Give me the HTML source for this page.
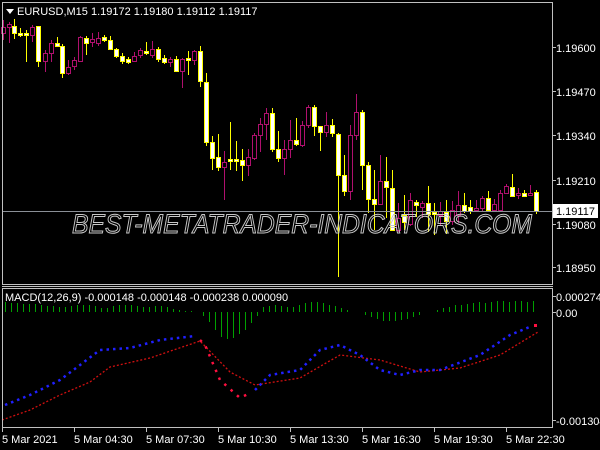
<!DOCTYPE html>
<html><head><style>
body{margin:0;background:#000;width:600px;height:450px;overflow:hidden}
svg{display:block}
text{font-family:"Liberation Sans",sans-serif;font-size:11px;fill:#fff}
.Y{fill:#fff;stroke:#ffff00}.M{fill:#000;stroke:#b0106e}
</style></head><body>
<svg width="600" height="450" xmlns="http://www.w3.org/2000/svg">
<rect width="600" height="450" fill="#000"/>
<g shape-rendering="crispEdges">
<path stroke="#ffff00" stroke-width="1" fill="none" d="M14.5 19V39M20.5 28V37M26.5 30V62M38.5 26V67M57.5 37V47M62.5 44V78M86.5 36V55M104.5 35V42M110.5 36V50M116.5 48V58M122.5 53V64M128.5 57V64M146.5 42V55M158.5 47V62M164.5 55V64M176.5 56V72M188.5 51V75M200.5 46V87M206.5 73V146M212.5 136V170M218.5 134V171M230.5 122V170M236.5 141V171M242.5 149V181M272.5 108V152M278.5 131V162M296.5 118V146M314.5 105V136M320.5 126V151M332.5 119V137M338.5 133V277M344.5 155V196M362.5 110V190M368.5 162V213M374.5 170V230M386.5 157V218M392.5 170V231M404.5 195V230M416.5 200V217M428.5 186V232M434.5 203V235M446.5 200V234M464.5 193V213M470.5 200V214M488.5 191V211M512.5 174V197M524.5 190V197M536.5 190V214"/>
<path stroke="#b0106e" stroke-width="1" fill="none" d="M3.5 20V40M9.5 22V43M32.5 25V42M45.5 50V72M51.5 40V62M68.5 60V75M74.5 57V70M80.5 36V62M92.5 33V47M98.5 32V46M134.5 52V62M140.5 48V58M152.5 41V58M170.5 57V67M182.5 58V88M194.5 50V65M224.5 151V200M248.5 149V176M254.5 133V160M260.5 118V152M266.5 108V140M284.5 140V175M290.5 120V158M302.5 121V147M308.5 105V128M326.5 112V137M350.5 125V200M356.5 94V140M380.5 155V205M398.5 203V232M410.5 193V226M422.5 201V218M440.5 202V226M452.5 201V225M458.5 191V223M476.5 200V212M482.5 196V211M494.5 199V212M500.5 190V211M506.5 184V194M518.5 188V199M530.5 185V196"/>
</g>
<g shape-rendering="crispEdges">
<rect class="M" x="1.5" y="27.5" width="4" height="6"/>
<rect class="M" x="7.5" y="24.5" width="4" height="3"/>
<rect class="Y" x="12.5" y="26.5" width="4" height="7"/>
<rect class="Y" x="18.5" y="33.5" width="4" height="2"/>
<rect class="Y" x="24.5" y="33.5" width="4" height="2"/>
<rect class="M" x="30.5" y="27.5" width="4" height="8"/>
<rect class="Y" x="36.5" y="26.5" width="4" height="35"/>
<rect class="M" x="43.5" y="53.5" width="4" height="8"/>
<rect class="M" x="49.5" y="43.5" width="4" height="10"/>
<rect class="Y" x="55.5" y="43.5" width="4" height="3"/>
<rect class="Y" x="60.5" y="46.5" width="4" height="27"/>
<rect class="M" x="66.5" y="67.5" width="4" height="6"/>
<rect class="M" x="72.5" y="60.5" width="4" height="6"/>
<rect class="M" x="78.5" y="37.5" width="4" height="24"/>
<rect class="Y" x="84.5" y="38.5" width="4" height="5"/>
<rect class="M" x="90.5" y="39.5" width="4" height="3"/>
<rect class="M" x="96.5" y="38.5" width="4" height="5"/>
<rect class="Y" x="102.5" y="37.5" width="4" height="3"/>
<rect class="Y" x="108.5" y="40.5" width="4" height="9"/>
<rect class="Y" x="114.5" y="49.5" width="4" height="7"/>
<rect class="Y" x="120.5" y="56.5" width="4" height="5"/>
<rect class="Y" x="126.5" y="59.5" width="4" height="3"/>
<rect class="M" x="132.5" y="56.5" width="4" height="5"/>
<rect class="M" x="138.5" y="50.5" width="4" height="5"/>
<rect class="Y" x="144.5" y="51.5" width="4" height="2"/>
<rect class="M" x="150.5" y="49.5" width="4" height="6"/>
<rect class="Y" x="156.5" y="49.5" width="4" height="10"/>
<rect class="Y" x="162.5" y="58.5" width="4" height="4"/>
<rect class="M" x="168.5" y="59.5" width="4" height="3"/>
<rect class="Y" x="174.5" y="59.5" width="4" height="12"/>
<rect class="M" x="180.5" y="59.5" width="4" height="12"/>
<rect class="Y" x="186.5" y="58.5" width="4" height="2"/>
<rect class="M" x="192.5" y="51.5" width="4" height="9"/>
<rect class="Y" x="198.5" y="51.5" width="4" height="30"/>
<rect class="Y" x="204.5" y="82.5" width="4" height="60"/>
<rect class="Y" x="210.5" y="142.5" width="4" height="16"/>
<rect class="Y" x="216.5" y="157.5" width="4" height="10"/>
<rect class="M" x="222.5" y="162.5" width="4" height="5"/>
<rect class="Y" x="228.5" y="159.5" width="4" height="2"/>
<rect class="Y" x="234.5" y="159.5" width="4" height="2"/>
<rect class="Y" x="240.5" y="160.5" width="4" height="5"/>
<rect class="M" x="246.5" y="157.5" width="4" height="8"/>
<rect class="M" x="252.5" y="135.5" width="4" height="23"/>
<rect class="M" x="258.5" y="124.5" width="4" height="11"/>
<rect class="M" x="264.5" y="113.5" width="4" height="11"/>
<rect class="Y" x="270.5" y="113.5" width="4" height="36"/>
<rect class="Y" x="276.5" y="149.5" width="4" height="9"/>
<rect class="M" x="282.5" y="149.5" width="4" height="9"/>
<rect class="M" x="288.5" y="140.5" width="4" height="9"/>
<rect class="Y" x="294.5" y="140.5" width="4" height="4"/>
<rect class="M" x="300.5" y="125.5" width="4" height="20"/>
<rect class="M" x="306.5" y="107.5" width="4" height="18"/>
<rect class="Y" x="312.5" y="107.5" width="4" height="19"/>
<rect class="Y" x="318.5" y="126.5" width="4" height="6"/>
<rect class="M" x="324.5" y="125.5" width="4" height="7"/>
<rect class="Y" x="330.5" y="125.5" width="4" height="8"/>
<rect class="Y" x="336.5" y="134.5" width="4" height="41"/>
<rect class="Y" x="342.5" y="175.5" width="4" height="16"/>
<rect class="M" x="348.5" y="135.5" width="4" height="56"/>
<rect class="M" x="354.5" y="112.5" width="4" height="23"/>
<rect class="Y" x="360.5" y="112.5" width="4" height="53"/>
<rect class="Y" x="366.5" y="165.5" width="4" height="34"/>
<rect class="Y" x="372.5" y="199.5" width="4" height="5"/>
<rect class="M" x="378.5" y="181.5" width="4" height="23"/>
<rect class="Y" x="384.5" y="181.5" width="4" height="6"/>
<rect class="Y" x="390.5" y="188.5" width="4" height="42"/>
<rect class="M" x="396.5" y="218.5" width="4" height="12"/>
<rect class="Y" x="402.5" y="215.5" width="4" height="7"/>
<rect class="M" x="408.5" y="200.5" width="4" height="24"/>
<rect class="Y" x="414.5" y="202.5" width="4" height="3"/>
<rect class="M" x="420.5" y="203.5" width="4" height="4"/>
<rect class="Y" x="426.5" y="203.5" width="4" height="11"/>
<rect class="Y" x="432.5" y="212.5" width="4" height="2"/>
<rect class="M" x="438.5" y="211.5" width="4" height="4"/>
<rect class="Y" x="444.5" y="212.5" width="4" height="9"/>
<rect class="M" x="450.5" y="210.5" width="4" height="11"/>
<rect class="M" x="456.5" y="205.5" width="4" height="10"/>
<rect class="Y" x="462.5" y="205.5" width="4" height="6"/>
<rect class="Y" x="468.5" y="207.5" width="4" height="4"/>
<rect class="M" x="474.5" y="208.5" width="4" height="2"/>
<rect class="M" x="480.5" y="198.5" width="4" height="10"/>
<rect class="Y" x="486.5" y="198.5" width="4" height="12"/>
<rect class="M" x="492.5" y="204.5" width="4" height="6"/>
<rect class="M" x="498.5" y="193.5" width="4" height="17"/>
<rect class="M" x="504.5" y="186.5" width="4" height="7"/>
<rect class="Y" x="510.5" y="187.5" width="4" height="9"/>
<rect class="M" x="516.5" y="193.5" width="4" height="2"/>
<rect class="Y" x="522.5" y="193.5" width="4" height="3"/>
<rect class="M" x="528.5" y="193.5" width="4" height="2"/>
<rect class="Y" x="534.5" y="192.5" width="4" height="19"/>
</g>
<rect x="2" y="211" width="550" height="1" fill="#8a8f96"/>
<text x="72" y="233" font-style="italic" stroke="#c8c8c8" stroke-width="1" textLength="460" lengthAdjust="spacingAndGlyphs" style="font-size:27px;fill:none">BEST-METATRADER-INDICATORS.COM</text>
<path stroke="#00a000" stroke-width="1" fill="none" d="M5.5 312V302M11.5 312V303M17.5 312V303M23.5 312V304M29.5 312V304M35.5 312V304M41.5 312V305M47.5 312V306M53.5 312V306M59.5 312V307M65.5 312V307M71.5 312V306M77.5 312V305M83.5 312V305M89.5 312V305M95.5 312V306M101.5 312V308M107.5 312V308M113.5 312V306M119.5 312V305M125.5 312V305M131.5 312V305M137.5 312V306M143.5 312V307M149.5 312V307M155.5 312V306M161.5 312V306M167.5 312V307M173.5 312V309M179.5 312V310M185.5 312V311M191.5 312V311M203.5 312V316M209.5 312V322M215.5 312V330M221.5 312V337M227.5 312V339M233.5 312V338M239.5 312V334M245.5 312V330M251.5 312V323M257.5 312V316M263.5 312V307M269.5 312V306M275.5 312V305M281.5 312V306M287.5 312V307M293.5 312V307M299.5 312V305M305.5 312V303M311.5 312V302M317.5 312V302M323.5 312V303M329.5 312V305M335.5 312V306M341.5 312V308M347.5 312V310M365.5 312V315M371.5 312V317M377.5 312V319M383.5 312V321M389.5 312V321M395.5 312V321M401.5 312V320M407.5 312V319M413.5 312V317M419.5 312V315M437.5 312V310M443.5 312V308M449.5 312V307M455.5 312V305M461.5 312V305M467.5 312V304M473.5 312V303M479.5 312V302M485.5 312V303M491.5 312V302M497.5 312V301M503.5 312V301M509.5 312V302M515.5 312V301M521.5 312V301M527.5 312V302M533.5 312V301"/>
<polyline fill="none" stroke="#d01010" stroke-width="1.3" stroke-dasharray="2 2" points="2,420 30,410 60,395 90,382 110,367 150,358 200,341 230,372 255,385 300,378 340,355 380,360 420,372 460,368 500,355 538,332"/>
<polyline fill="none" stroke="#2020ff" stroke-width="2.5" stroke-dasharray="2.5 4" points="5,405 30,395 60,380 100,350 130,348 160,340 195,336"/>
<polyline fill="none" stroke="#ff1040" stroke-width="2.5" stroke-dasharray="2.5 6" points="200,340 205,345 220,380 240,398 250,393"/>
<polyline fill="none" stroke="#2020ff" stroke-width="2.5" stroke-dasharray="2.5 4" points="255,390 270,375 300,370 320,350 340,345 360,355 380,370 400,375 420,370 440,370 480,355 510,335 532,326"/>
<rect x="534" y="324" width="3" height="3" fill="#ff1040"/>
<rect x="2.5" y="2.5" width="550" height="282" fill="none" stroke="#c0c0c0"/>
<rect x="2" y="286" width="551" height="1" fill="#c0c0c0"/>
<rect x="2.5" y="288.5" width="550" height="139" fill="none" stroke="#c0c0c0"/>
<polygon points="6,9 14,9 10,14" fill="#fff"/>
<text x="17" y="15">EURUSD,M15  1.19172 1.19180 1.19112 1.19117</text>
<text x="5" y="301">MACD(12,26,9) -0.000148 -0.000148 -0.000238 0.000090</text>
<g fill="#c0c0c0">
<rect x="552" y="47" width="4" height="1"/><rect x="552" y="91" width="4" height="1"/><rect x="552" y="135" width="4" height="1"/><rect x="552" y="180" width="4" height="1"/><rect x="552" y="224" width="4" height="1"/><rect x="552" y="267" width="4" height="1"/><rect x="552" y="296" width="4" height="1"/><rect x="552" y="312" width="4" height="1"/><rect x="552" y="420" width="4" height="1"/>
<rect x="2" y="428" width="1" height="4"/><rect x="74" y="428" width="1" height="4"/><rect x="146" y="428" width="1" height="4"/><rect x="218" y="428" width="1" height="4"/><rect x="290" y="428" width="1" height="4"/><rect x="362" y="428" width="1" height="4"/><rect x="434" y="428" width="1" height="4"/><rect x="506" y="428" width="1" height="4"/>
</g>
<text x="556" y="52">1.19600</text><text x="556" y="96">1.19470</text><text x="556" y="140">1.19340</text><text x="556" y="185">1.19210</text><text x="556" y="229">1.19080</text><text x="556" y="272">1.18950</text>
<text x="556" y="301">0.000274</text><text x="556" y="317">0.00</text><text x="556" y="425">-0.001304</text>
<text x="2" y="443">5 Mar 2021</text><text x="74" y="443">5 Mar 04:30</text><text x="146" y="443">5 Mar 07:30</text><text x="218" y="443">5 Mar 10:30</text><text x="290" y="443">5 Mar 13:30</text><text x="362" y="443">5 Mar 16:30</text><text x="434" y="443">5 Mar 19:30</text><text x="506" y="443">5 Mar 22:30</text>
<rect x="553" y="204" width="45" height="14" fill="#fff"/>
<text x="556" y="215" style="fill:#000">1.19117</text>
</svg>
</body></html>
